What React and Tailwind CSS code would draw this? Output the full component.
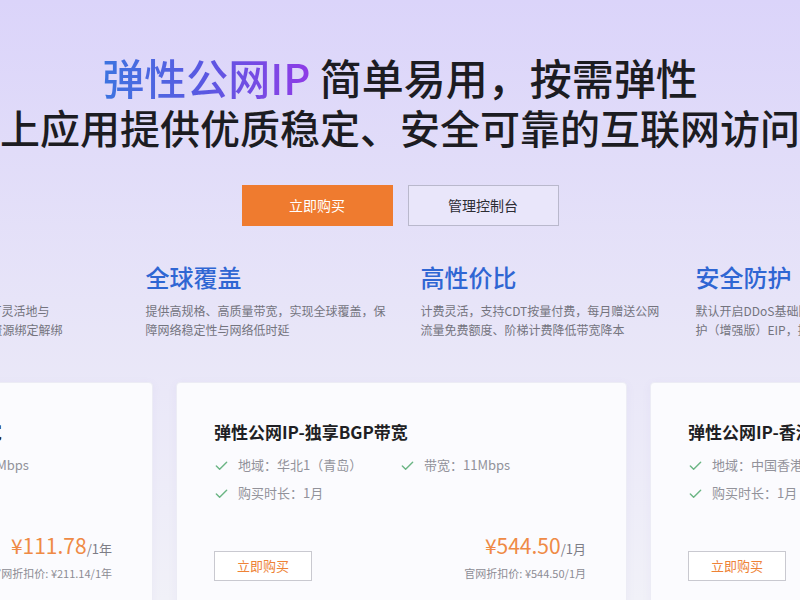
import React from 'react';

const features = [
    {
        title: '灵活配置',
        lines: ['独立公网IP地址资源，可灵活地与', '云服务器、负载均衡等资源绑定解绑'],
    },
    {
        title: '全球覆盖',
        lines: ['提供高规格、高质量带宽，实现全球覆盖，保', '障网络稳定性与网络低时延'],
    },
    {
        title: '高性价比',
        lines: ['计费灵活，支持CDT按量付费，每月赠送公网', '流量免费额度、阶梯计费降低带宽降本'],
    },
    {
        title: '安全防护',
        lines: ['默认开启DDoS基础防护，可选DDoS原生防', '护（增强版）EIP，提供更高级别的防护'],
    },
];

const products = [
    {
        title: '弹性公网IP-BGP（多线）精品带宽',
        specs: ['地域：华东1（杭州）', '带宽：5Mbps', '购买时长：1年'],
        price: '111.78',
        unit: '1年',
        origin: '¥211.14/1年',
    },
    {
        title: '弹性公网IP-独享BGP带宽',
        specs: ['地域：华北1（青岛）', '带宽：11Mbps', '购买时长：1月'],
        price: '544.50',
        unit: '1月',
        origin: '¥544.50/1月',
    },
    {
        title: '弹性公网IP-香港精品带宽',
        specs: ['地域：中国香港', '带宽：5Mbps', '购买时长：1月'],
        price: '329.00',
        unit: '1月',
        origin: '¥329.00/1月',
    },
];

function Check() {
    return (
        <svg width="15" height="15" viewBox="0 0 16 16" fill="none" className="shrink-0">
            <path d="M2.5 8.5l3.5 3.5 7.5-7.5" stroke="#6bb584" strokeWidth="1.5" strokeLinecap="round" strokeLinejoin="round" />
        </svg>
    );
}

function ProductCard({ p }) {
    return (
        <div className="w-[451px] h-[240px] shrink-0 rounded-[4px] bg-[#fbfbfe] border border-[#ececf5] shadow-[0_2px_10px_rgba(120,110,180,0.06)] pt-[37px] pl-[37px] pr-[40px]">
            <div className="text-[17px] leading-[24px] font-semibold text-[#1f1f24] whitespace-nowrap">{p.title}</div>

            <div className="mt-[11px] grid grid-cols-[186px_1fr] gap-y-[8px] text-[13px] leading-[20px] text-[#92929a]">
                {p.specs.map((s) => (
                    <div key={s} className="flex items-center gap-[9px] whitespace-nowrap">
                        <Check />
                        <span>{s}</span>
                    </div>
                ))}
            </div>

            <div className="mt-[29px] flex items-end justify-between">
                <button className="w-[98px] h-[30px] border border-[#c9c9d0] bg-white text-[13px] text-[#ee8236]">
                    立即购买
                </button>
                <div className="flex flex-col items-end">
                    <div className="leading-[26px] whitespace-nowrap">
                        <span className="text-[21px] text-[#ef8a45]">¥{p.price}</span>
                        <span className="text-[13px] text-[#7d7d86]">/{p.unit}</span>
                    </div>
                    <div className="mt-[3px] text-[11px] leading-[16px] text-[#8c8c94] whitespace-nowrap">
                        官网折扣价: {p.origin}
                    </div>
                </div>
            </div>
        </div>
    );
}

export default function App() {
    return (
        <div
            className="w-[800px] h-[600px] overflow-hidden bg-gradient-to-b from-[#dbd4fa] via-[#e7e4f8] to-[#f1f1f8]"
            style={{ fontFamily: '"Noto Sans CJK SC", "Noto Sans", sans-serif' }}
        >
            {/* Hero */}
            <div className="pt-[52px] flex flex-col items-center">
                <h1 className="text-[42px] leading-[50px] font-medium text-[#1c1c22] whitespace-nowrap">
                    <span className="bg-gradient-to-r from-[#3b74e0] via-[#5a57e2] to-[#8e3ae6] bg-clip-text text-transparent">
                        弹性公网IP
                    </span>{' '}
                    简单易用，按需弹性
                </h1>
                <div className="w-[800px] flex justify-center">
                    <p className="shrink-0 text-[40px] leading-[50px] font-medium text-[#1c1c22] whitespace-nowrap">
                        为云上应用提供优质稳定、安全可靠的互联网访问服务
                    </p>
                </div>

                <div className="mt-[33px] flex gap-[15px]">
                    <button className="w-[151px] h-[41px] bg-[#ef7b2f] text-white text-[14px]">立即购买</button>
                    <button className="w-[151px] h-[41px] border border-[#b9b8cc] bg-[#e9e6fa] text-[#2c2c33] text-[14px]">
                        管理控制台
                    </button>
                </div>
            </div>

            {/* Features */}
            <div className="mt-[35px] w-[800px] flex justify-center pl-[6px]">
                <div className="shrink-0 flex gap-[35px]">
                    {features.map((f) => (
                        <div key={f.title} className="w-[240px] shrink-0">
                            <div className="text-[24px] leading-[32px] font-medium text-[#2f66d3]">{f.title}</div>
                            <div className="mt-[8px] text-[12px] leading-[19px] text-[#74747e] whitespace-nowrap">
                                {f.lines[0]}
                                <br />
                                {f.lines[1]}
                            </div>
                        </div>
                    ))}
                </div>
            </div>

            {/* Products */}
            <div className="mt-[43px] w-[800px] flex justify-center pl-[3px]">
                <div className="shrink-0 flex gap-[23px]">
                    {products.map((p) => (
                        <ProductCard key={p.title} p={p} />
                    ))}
                </div>
            </div>
        </div>
    );
}
